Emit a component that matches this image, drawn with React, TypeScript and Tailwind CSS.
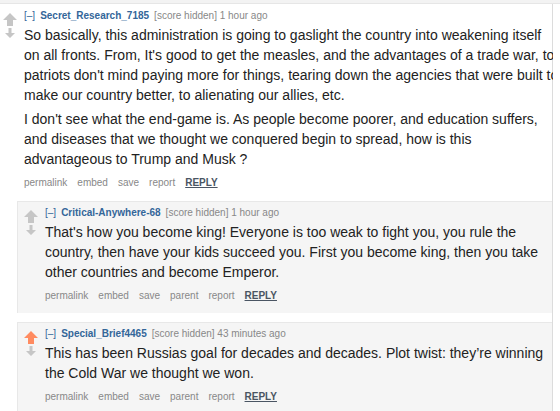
import type { ReactNode } from "react";

type Comment = {
  author: string;
  age: string;
  body: string[];
  upvoted?: boolean;
  parent?: boolean;
};

const top: Comment = {
  author: "Secret_Research_7185",
  age: "1 hour ago",
  body: [
    "So basically, this administration is going to gaslight the country into weakening itself on all fronts. From, It's good to get the measles, and the advantages of a trade war, to patriots don't mind paying more for things, tearing down the agencies that were built to make our country better, to alienating our allies, etc.",
    "I don't see what the end-game is. As people become poorer, and education suffers, and diseases that we thought we conquered begin to spread, how is this advantageous to Trump and Musk ?",
  ],
};

const replies: Comment[] = [
  {
    author: "Critical-Anywhere-68",
    age: "1 hour ago",
    parent: true,
    body: [
      "That's how you become king! Everyone is too weak to fight you, you rule the country, then have your kids succeed you. First you become king, then you take other countries and become Emperor.",
    ],
  },
  {
    author: "Special_Brief4465",
    age: "43 minutes ago",
    parent: true,
    upvoted: true,
    body: [
      "This has been Russias goal for decades and decades. Plot twist: they\u2019re winning the Cold War we thought we won.",
    ],
  },
];

function Arrows({ upvoted }: { upvoted?: boolean }) {
  return (
    <div className="flex w-[21px] shrink-0 flex-col items-start pt-[4px]">
      <svg width="14" height="13" viewBox="0 0 14 13">
        <path d="M7 0 L14 7 L10 7 L10 13 L4 13 L4 7 L0 7 Z" fill={upvoted ? "#ff8b60" : "#c6c6c6"} />
      </svg>
      <svg width="10" height="10" viewBox="0 0 10 10" className="ml-[2px] mt-[2px]">
        <path d="M3.5 0 L6.5 0 L6.5 5 L10 5 L5 10 L0 5 L3.5 5 Z" fill="#c6c6c6" />
      </svg>
    </div>
  );
}

function Entry({ c, children }: { c: Comment; children?: ReactNode }) {
  const buttons = ["permalink", "embed", "save", ...(c.parent ? ["parent"] : []), "report"];
  return (
    <div className="flex">
      <Arrows upvoted={c.upvoted} />
      <div className="min-w-0 flex-1">
        <p className="flex items-center gap-[5px] text-[10px] leading-[13px] text-[#888]">
          <span className="text-[#369]">[–]</span>
          <span className="font-bold text-[#369]">{c.author}</span>
          <span>[score hidden] {c.age}</span>
        </p>
        <div className="mt-[3px] mr-[-8px] text-[14px] leading-[20px] text-[#222]">
          {c.body.map((p, i) => (
            <p key={i} className="mb-[4px]">
              {p}
            </p>
          ))}
        </div>
        <div className="mt-[7px] flex items-center gap-[10px] text-[10px] leading-[13px] text-[#888]">
          {buttons.map((b) => (
            <span key={b}>{b}</span>
          ))}
          <span className="font-bold text-[#4a5563] underline">REPLY</span>
        </div>
        {children}
      </div>
    </div>
  );
}

export default function App() {
  return (
    <div className="h-[411px] w-[560px] overflow-hidden bg-white font-['Liberation_Sans',Arial,sans-serif]">
      <div className="h-[4px] border-b border-[#e6e6e6] bg-[#f3f3f3]" />
      <div className="flex">
        <div className="w-[553px] shrink-0 border-r border-[#dcdcdc] pl-[3px] pt-[5px]">
          <Entry c={top} />
          <div className="ml-[14px] mt-[12px] flex flex-col gap-[9px]">
            {replies.map((r) => (
              <div key={r.author} className="border-l border-t border-[#e8e8e8] bg-[#f5f5f5] pb-[11px] pl-[6px] pt-[4px]">
                <Entry c={r} />
              </div>
            ))}
          </div>
        </div>
        <div className="flex-1 bg-white" />
      </div>
    </div>
  );
}
